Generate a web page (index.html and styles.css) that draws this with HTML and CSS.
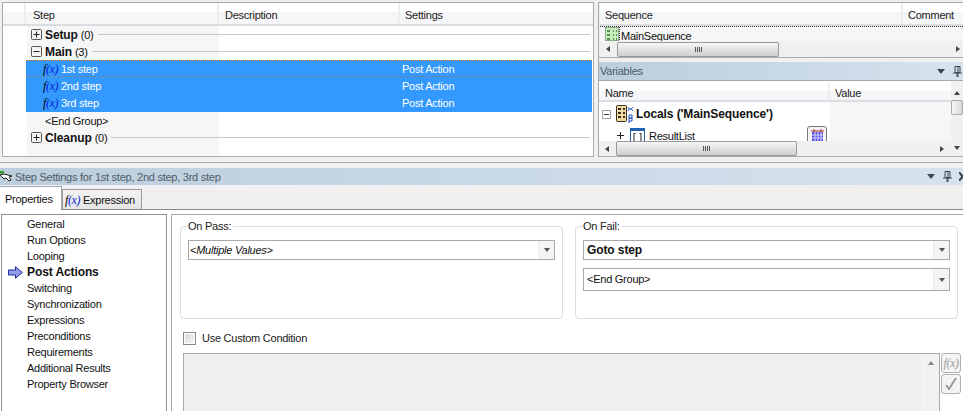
FILE: index.html
```html
<!DOCTYPE html>
<html lang="en">
<head>
<meta charset="utf-8">
<title>Step Settings</title>
<link rel="stylesheet" href="styles.css">
</head>
<body>
<div class="top">
  <section class="steps">
    <div class="head step-head">
      <div class="hc c0"></div><div class="hc c1">Step</div><div class="hc c2">Description</div><div class="hc c3">Settings</div>
    </div>
    <div class="tree">
      <div class="row group"><svg class="exp" viewBox="0 0 11 11"><use href="#plus"/></svg><b>Setup</b><span class="cnt">(0)</span><i class="rule"></i></div>
      <div class="row group"><svg class="exp" viewBox="0 0 11 11"><use href="#minus"/></svg><b>Main</b><span class="cnt">(3)</span><i class="rule"></i></div>
      <div class="row sel focus"><span class="name"><span class="fx">f<em>(x)</em></span>1st step</span><span class="desc"></span><span>Post Action</span></div>
      <div class="row sel"><span class="name"><span class="fx">f<em>(x)</em></span>2nd step</span><span class="desc"></span><span>Post Action</span></div>
      <div class="row sel tall"><span class="name"><span class="fx">f<em>(x)</em></span>3rd step</span><span class="desc"></span><span>Post Action</span></div>
      <div class="row end">&lt;End Group&gt;</div>
      <div class="row group"><svg class="exp" viewBox="0 0 11 11"><use href="#plus"/></svg><b>Cleanup</b><span class="cnt">(0)</span><i class="rule"></i></div>
    </div>
  </section>
  <section class="side">
    <div class="seq">
      <div class="head seq-head"><div class="hc s1">Sequence</div><div class="hc s2">Comment</div></div>
      <div class="seq-row">
        <svg class="seq-ico" width="14" height="14" viewBox="0 0 14 14"><rect x=".5" y=".5" width="13" height="13" fill="#c6eeb8" stroke="#8aa888"/><path d="M2 3h3v2H2zM2 7h3v2H2zM2 11h3v2H2z" fill="#5f8f5f"/><path d="M8 3h1v2H8zM11 3h1v2h-1zM8 7h1v2H8zM11 7h1v2h-1zM8 11h1v2H8zM11 11h1v2h-1z" fill="#6a8a6a"/></svg>
        <span class="seq-name">MainSequence</span>
      </div>
      <div class="hbar seq-bar"><span class="al"></span><span class="thumb t1"><span class="grip"></span></span><span class="spacer"></span><span class="ar"></span></div>
    </div>
    <div class="title var-title"><span>Variables</span><span class="tools"><span class="tri"></span><svg class="pin" width="9" height="11" viewBox="0 0 9 11"><path d="M2 .5h5v6H2zM5 1v5M0 7h9M4 7h1v4H4z" fill="none" stroke="#3c4650"/></svg></span></div>
    <div class="vars">
      <div class="vars-main">
        <div class="head var-head"><div class="hc v1">Name</div><div class="hc v2">Value</div></div>
        <div class="vars-tree">
          <div class="v-row locals">
            <svg class="vexp" width="9" height="9" viewBox="0 0 9 9"><rect x=".5" y=".5" width="8" height="8" fill="#fff" stroke="#a0a0a0"/><path d="M2 4.500h5" stroke="#333"/></svg>
            <svg class="loc-ico" width="19" height="19" viewBox="0 0 19 19"><rect x=".5" y=".5" width="10" height="16" rx="1" fill="#f0d9a0" stroke="#3a3020"/><path d="M2 3h3v2H2zM7 3h2v2H7zM2 7h3v2H2zM7 7h2v2H7zM2 11h3v2H2zM7 11h2v2H7z" fill="#3a3020"/><path d="M12 2c1 3 3 3 5 0M12 6c2-3 3-3 5 0M13 10v8M13 10h3v3h-3h3v3h-3" fill="none" stroke="#2050c0"/></svg>
            <b>Locals ('MainSequence')</b>
          </div>
          <div class="v-row result">
            <svg class="vplus" width="8" height="8" viewBox="0 0 8 8"><path d="M0 4.500h7M3.500 1v7" stroke="#222"/></svg>
            <svg class="arr-ico" width="15" height="15" viewBox="0 0 15 15"><rect x=".5" y=".5" width="14" height="16" fill="#fff" stroke="#2060b0"/><path d="M1 2h13" stroke="#2060b0" stroke-width="2"/><path d="M5.500 5.500h-1.500v8h1.500M9.500 5.500h1.500v8h-1.500" fill="none" stroke="#222"/></svg>
            <span class="r-name">ResultList</span>
            <span class="arr-btn"><svg width="13" height="13" viewBox="0 0 13 13"><path d="M1 3h11v10H1z" fill="#5a50e8"/><path d="M1 6h11M1 9h11M4 3v10M7 3v10M10 3v10" stroke="#d8d8ff"/><path d="M0 2h13" stroke="#a03030"/><path d="M3 0v3M10 0v3" stroke="#a03030"/></svg></span>
          </div>
        </div>
        <div class="hbar var-bar"><span class="al"></span><span class="thumb t2"><span class="grip"></span></span><span class="spacer"></span><span class="ar"></span></div>
      </div>
      <div class="vbar"><span class="au"></span><span class="vthumb"></span><span class="spacer"></span><span class="ad"></span></div>
    </div>
  </section>
</div>

<div class="lower-line"></div>
<div class="title set-title">
  <span class="set-name"><svg class="set-ico" width="13" height="11" viewBox="0 0 13 11"><path d="M0 4l4-1 8 2-3 1 2 3-2 1-3-3-2 1z" fill="#fff" stroke="#222"/><path d="M0 0h4v2.500H0z" fill="#2a9a2a"/></svg>Step Settings for 1st step, 2nd step, 3rd step</span>
  <span class="tools"><span class="tri"></span><svg class="pin" width="9" height="11" viewBox="0 0 9 11"><path d="M2 .5h5v6H2zM5 1v5M0 7h9M4 7h1v4H4z" fill="none" stroke="#3c4650"/></svg><svg class="close" width="4" height="9" viewBox="0 0 4 9"><path d="M0 0l7 9M7 0L0 9" stroke="#3c4650" stroke-width="2" fill="none"/></svg></span>
</div>
<div class="tabs">
  <div class="tab active">Properties</div>
  <div class="tab"><span class="fx tabfx">f<em>(x)</em></span>Expression</div>
</div>
<div class="pane">
  <nav class="cats">
    <div class="cat">General</div>
    <div class="cat">Run Options</div>
    <div class="cat">Looping</div>
    <div class="cat cur"><svg class="arrow" width="15" height="13" viewBox="0 0 15 13"><path d="M.5 4h7V.7L14.300 6.500 7.500 12.300V9H.5z" fill="#8f9bea" stroke="#1c2a9a"/></svg>Post Actions</div>
    <div class="cat">Switching</div>
    <div class="cat">Synchronization</div>
    <div class="cat">Expressions</div>
    <div class="cat">Preconditions</div>
    <div class="cat">Requirements</div>
    <div class="cat">Additional Results</div>
    <div class="cat">Property Browser</div>
  </nav>
  <main class="form">
    <div class="groups">
      <fieldset class="gbox">
        <legend>On Pass:</legend>
        <div class="combo"><span class="val multi">&lt;Multiple Values&gt;</span><span class="drop"><span class="tri small"></span></span></div>
      </fieldset>
      <fieldset class="gbox">
        <legend>On Fail:</legend>
        <div class="combo"><span class="val strong">Goto step</span><span class="drop"><span class="tri small"></span></span></div>
        <div class="combo big"><span class="val">&lt;End Group&gt;</span><span class="drop"><span class="tri small"></span></span></div>
      </fieldset>
    </div>
    <label class="check"><span class="cb"></span>Use Custom Condition</label>
    <div class="expr-wrap">
      <div class="expr"><div class="expr-bar"><span class="au dim"></span></div></div>
      <div class="expr-btns">
        <span class="ebtn"><span class="fx efx">f(x)</span></span>
        <span class="ebtn"><svg width="14" height="14" viewBox="0 0 14 14"><path d="M2 8l3 4 7-11" fill="none" stroke="#9a9a9a" stroke-width="2"/></svg></span>
      </div>
    </div>
  </main>
</div>

<svg class="defs" width="0" height="0">
  <defs>
    <g id="plus"><rect x=".5" y=".5" width="10" height="10" rx="1" fill="#f4f4f4" stroke="#555"/><path d="M2.500 5.500h6M5.500 2.500v6" stroke="#222"/></g>
    <g id="minus"><rect x=".5" y=".5" width="10" height="10" rx="1" fill="#f4f4f4" stroke="#555"/><path d="M2.500 5.500h6" stroke="#222"/></g>
  </defs>
</svg>
</body>
</html>
```

FILE: styles.css
```css
* { box-sizing: border-box; }
html, body { margin: 0; height: 411px; overflow: hidden; }
body {
  background: #f0f0f0;
  color: #111;
  font: 11px/14px "Liberation Sans", Arial, sans-serif;
  letter-spacing: -0.25px;
  width: 963px;
}
b, .cur, .strong { font-weight: 700; font-size: 12px; letter-spacing: -0.1px; }
.defs { display: block; height: 0; }
.spacer { flex: 1; }

.top { display: grid; grid-template-columns: 592px 365px; column-gap: 4px; height: 155px; margin: 2px 0 0 2px; }
.steps { border: 1px solid #a9a9a9; background: #fff; height: 155px; overflow: hidden; }

.head { display: flex; height: 23px; border-bottom: 2px solid #dadde1; background: linear-gradient(#fff 0, #fff 9px, #f5f6f7 9px); }
.hc { border-right: 2px solid #eceef0; padding: 5px 0 0 7px; color: #222; }
.c0 { width: 23px; } .c1 { width: 193px; } .c2 { width: 181px; padding-left: 6px; } .c3 { flex: 1; border-right: 0; padding-left: 5px; }

.tree { height: 130px; background: linear-gradient(to right, #fff 24px, #f6f6f6 24px, #f6f6f6 216px, #fff 216px); }
.row { display: flex; align-items: center; height: 17px; white-space: nowrap; }
.group { padding-left: 28px; padding-right: 3px; }
.exp { width: 11px; height: 11px; margin-right: 3px; flex: none; }
.cnt { margin-left: 3px; }
.rule { flex: 1; height: 1px; background: #c8c8c8; margin-left: 4px; }
.sel { background: #3399ff; color: #fff; margin-left: 23px; margin-right: 1px; }
.tall { height: 18px; }
.focus { border-top: 1px dotted #f07800; border-bottom: 1px dotted #8a7a78; }
.name { width: 182px; padding-left: 17px; display: block; flex: none; }
.desc { width: 194px; flex: none; }
.fx { display: inline-block; width: 18px; font: italic 12px/14px "Liberation Serif", serif; letter-spacing: -0.4px; color: #000; }
.fx em { color: #0a1fd0; font-style: italic; }
.end { padding-left: 42px; }

.side { display: flex; flex-direction: column; height: 155px; overflow: hidden; border-left: 1px solid #a9a9a9; border-bottom: 1px solid #a9a9a9; }
.seq { height: 56px; border-top: 1px solid #a9a9a9; border-bottom: 1px solid #a9a9a9; padding-left: 1px; flex: none; overflow: hidden; }
.s1 { width: 303px; padding-left: 5px; } .s2 { flex: 1; border-right: 0; padding-left: 5px; }
.seq-row { display: flex; height: 15px; overflow: hidden; background: #f6f6f6; padding-left: 5px; align-items: flex-start; border-top: 1px dotted #333; }
.seq-ico { flex: none; }
.seq-name { padding: 2px 0 0 1px; border-left: 1px dotted #333; line-height: 15px; }

.hbar { display: flex; align-items: center; height: 16px; background: #f0f0f0; padding: 0 2px 0 4px; flex: none; }
.al { width: 0; height: 0; border: 3px solid transparent; border-left: 0; border-right: 4px solid #444; margin-right: 7px; margin-left: 2px; }
.ar { width: 0; height: 0; border: 3px solid transparent; border-right: 0; border-left: 4px solid #444; margin-right: 1px; }
.thumb { display: flex; justify-content: center; align-items: center; height: 15px; border: 1px solid #9a9a9a; border-radius: 2px; background: linear-gradient(#f6f6f6, #e2e2e2 50%, #cfcfcf); }
.grip { width: 7px; height: 5px; background: repeating-linear-gradient(to right, #555 0 1px, transparent 1px 2px); }
.t1 { width: 162px; }
.t2 { width: 181px; }

.title { display: flex; justify-content: space-between; align-items: center; height: 18px; background: linear-gradient(to right, #bccddc, #d6e3ef); color: #4d5b68; }
.var-title { margin-top: 4px; padding-left: 1px; flex: none; }
.tools { display: flex; align-items: center; gap: 8px; }
.tri { display: block; width: 0; height: 0; border: 4px solid transparent; border-top: 5px solid #3c4650; border-bottom: 0; }
.var-title .tools { padding-right: 1px; }
.pin { display: block; }
.vars { display: flex; flex: 1; min-height: 0; border-top: 1px solid #a9a9a9; background: #fff; }
.vars-main { flex: 1; min-width: 0; display: flex; flex-direction: column; }
.var-head { height: 20px; flex: none; margin-top: 1px; }
.var-head .hc { padding-top: 4px; }
.v1 { width: 231px; padding-left: 6px; } .v2 { flex: 1; border-right: 0; padding-left: 5px; }
.vars-tree { flex: 1; min-height: 0; overflow: hidden; background: linear-gradient(to right, #fff 231px, #f6f6f6 231px); }
.v-row { display: flex; align-items: center; white-space: nowrap; }
.locals { height: 24px; padding-left: 3px; }
.vexp { margin-right: 5px; flex: none; }
.loc-ico { margin-right: 1px; flex: none; }
.result { height: 16px; padding-left: 18px; align-items: flex-start; overflow: hidden; }
.vplus { margin-top: 5px; margin-right: 5px; flex: none; }
.arr-ico { flex: none; margin-top: 2px; margin-right: 4px; }
.r-name { flex: none; width: 158px; margin-top: 3px; }
.arr-btn { display: flex; align-items: flex-end; justify-content: center; width: 20px; height: 20px; border: 1px solid #777; border-radius: 3px; background: #f4f4f4; flex: none; padding-bottom: 3px; }
.var-bar { height: 15px; padding-right: 6px; }
.vbar { width: 12px; flex: none; display: flex; flex-direction: column; align-items: center; background: #f0f0f0; padding: 10px 0 6px; }
.au { width: 0; height: 0; border: 3px solid transparent; border-top: 0; border-bottom: 4px solid #444; }
.ad { width: 0; height: 0; border: 3px solid transparent; border-bottom: 0; border-top: 4px solid #444; }
.vthumb { width: 12px; height: 15px; margin-top: 5px; border: 1px solid #aaa; border-radius: 2px; background: linear-gradient(to right, #f6f6f6, #d8d8d8); }

.lower-line { margin-top: 5px; background: #a9a9a9; height: 1px; }
.set-title { margin-top: 5px; height: 17px; }
.set-name { display: flex; align-items: center; }
.set-ico { margin-right: 2px; }
.close { display: block; margin-left: -1px; }

.tabs { display: flex; height: 25px; align-items: flex-end; border-bottom: 1px solid #8a8a8a; }
.tab { height: 20px; padding: 3px 0 0 2px; border: 1px solid #9a9a9a; border-bottom: 0; background: linear-gradient(#f4f4f4, #e4e4e4); }
.tab:last-child { width: 80px; }
.tabfx { width: 18px; }
.active { height: 24px; width: 62px; padding: 5px 0 0 5px; background: #fff; margin-bottom: -1px; border-color: #a9a9a9; border-left: 0; position: relative; z-index: 1; }

.pane { display: flex; height: 201px; background: #fff; padding-top: 4px; overflow: hidden; }
.cats { width: 166px; margin-left: 1px; border: 1px solid #8f8f8f; border-bottom: 0; padding: 1px 0 0 25px; background: #fff; flex: none; }
.cat { height: 16px; position: relative; white-space: nowrap; line-height: 16px; }
.arrow { position: absolute; left: -19px; top: 2px; }
.form { flex: 1; margin-left: 4px; border: 1px solid #a9a9a9; border-width: 1px 0 0 1px; padding: 7px 5px 0 8px; min-width: 0; }
.groups { display: grid; grid-template-columns: 383px 383px; column-gap: 12px; margin-top: -2px; }
.gbox { margin: 0; height: 99px; border: 1px solid #d5dfe5; border-radius: 4px; padding: 7px 7px 0; min-width: 0; }
legend { padding: 0 2px 0 0; line-height: 13px; color: #222; }
.combo { display: flex; height: 20px; border: 1px solid #a9a9a9; background: #fff; align-items: stretch; }
.big { height: 23px; margin-top: 8px; }
.val { flex: 1; padding: 2px 0 0 3px; }
.big .val { padding-top: 3px; }
.multi { font-style: italic; padding-left: 1px; }
.drop { width: 16px; background: #f4f4f4; border-left: 1px solid #eaeaea; display: flex; align-items: center; justify-content: center; }
.small { border-width: 3px; border-top-width: 4px; border-top-color: #555; border-bottom: 0; }
.check { display: flex; align-items: center; height: 14px; margin-top: 12px; color: #222; }
.cb { width: 13px; height: 13px; border: 1px solid #8a8a8a; background: linear-gradient(135deg, #dcdcdc, #f4f4f4); box-shadow: inset 0 0 0 1px #fff; margin: 0 6px 0 3px; }
.expr-wrap { display: flex; margin-top: 8px; margin-left: 3px; }
.expr { width: 757px; height: 70px; border: 1px solid #aaa; background: #efefef; display: flex; justify-content: flex-end; flex: none; }
.expr-bar { width: 17px; border-left: 1px solid #f6f6f6; display: flex; justify-content: center; padding-top: 7px; background: #f1f1f1; }
.dim { border-bottom-color: #888; }
.expr-btns { display: flex; flex-direction: column; gap: 1px; margin-left: 1px; }
.ebtn { display: flex; align-items: center; justify-content: center; width: 20px; height: 20px; border: 1px solid #b0b0b0; border-radius: 3px; background: #f4f4f4; }
.efx { color: #999; width: auto; }
```
